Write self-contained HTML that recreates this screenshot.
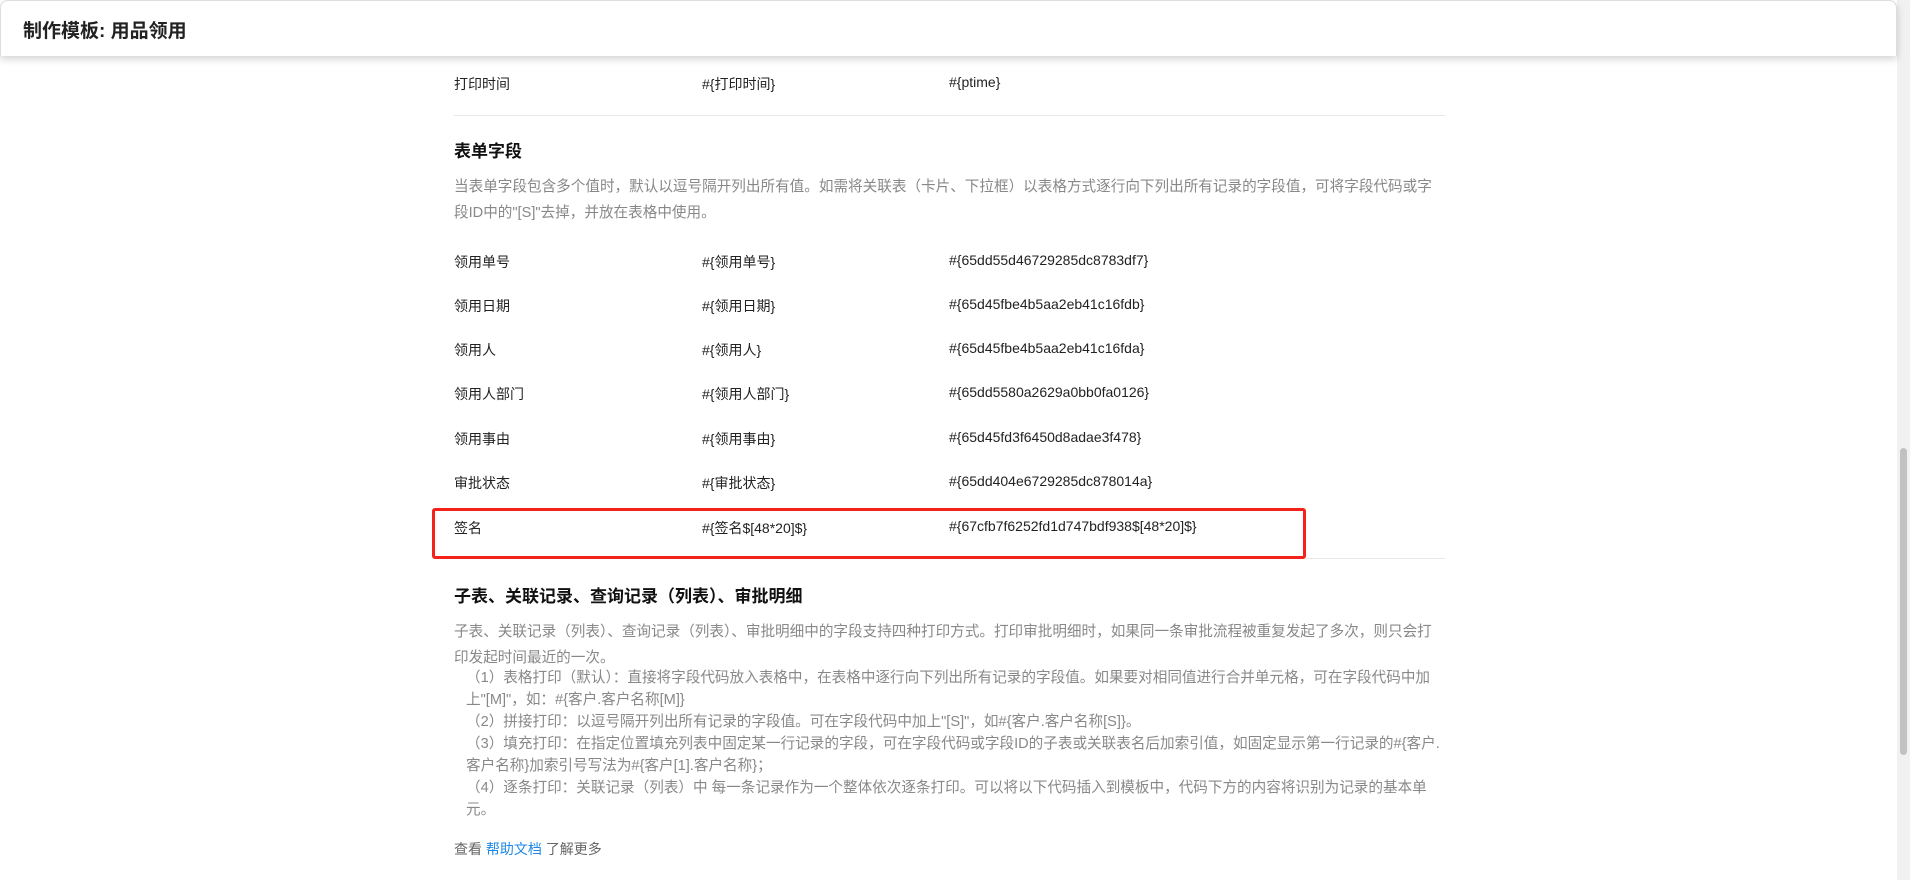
<!DOCTYPE html>
<html><head><meta charset="utf-8"><style>
*{margin:0;padding:0;box-sizing:border-box}
body{width:1910px;height:880px;overflow:hidden;background:#fff;font-family:"Liberation Sans","Noto Sans CJK SC",sans-serif;color:#222;position:relative}
.hdr{position:absolute;left:0;top:0;width:1897px;height:56px;background:#fff;box-shadow:0 3px 8px rgba(0,0,0,.18);border-radius:8px 8px 0 0;border:1px solid #ddd;border-bottom:none;z-index:2}
.hdr h1{position:absolute;left:22px;top:15px;font-size:19px;font-weight:bold;color:#222}
.sb{position:absolute;right:0;top:0;width:13px;height:880px;background:#f1f1f1}
.sb i{position:absolute;left:3px;top:448px;width:7px;height:307px;background:#c1c1c1;border-radius:4px}
.t{position:absolute;font-size:14px;color:#222;white-space:nowrap}
.hr{position:absolute;height:1px;background:#e8e8e8}
.h2{position:absolute;left:454px;font-size:17px;font-weight:bold;color:#111}
.desc{position:absolute;left:454px;width:991px;font-size:14.6px;color:#888;line-height:26px}
.lst{position:absolute;left:454px;width:991px;font-size:14.6px;color:#888;line-height:22px}
.lst div{padding-left:12px}
.red{position:absolute;left:432px;top:508px;width:874px;height:51px;border:3px solid #f5221b;border-radius:3px}
a{color:#1e88e5;text-decoration:none}
</style></head><body>
<div class="hdr"><h1>制作模板: 用品领用</h1></div>
<div class="sb"><i></i></div>

<div class="t" style="left:454px;top:74px">打印时间</div>
<div class="t" style="left:702px;top:74px">#{打印时间}</div>
<div class="t" style="left:949px;top:74px">#{ptime}</div>
<div class="hr" style="left:454px;top:115px;width:991px"></div>

<div class="h2" style="top:137px">表单字段</div>
<div class="desc" style="top:174px">当表单字段包含多个值时，默认以逗号隔开列出所有值。如需将关联表（卡片、下拉框）以表格方式逐行向下列出所有记录的字段值，可将字段代码或字段ID中的"[S]"去掉，并放在表格中使用。</div>

<div class="t" style="left:454px;top:252px">领用单号</div><div class="t" style="left:702px;top:252px">#{领用单号}</div><div class="t" style="left:949px;top:252px">#{65dd55d46729285dc8783df7}</div>
<div class="t" style="left:454px;top:296px">领用日期</div><div class="t" style="left:702px;top:296px">#{领用日期}</div><div class="t" style="left:949px;top:296px">#{65d45fbe4b5aa2eb41c16fdb}</div>
<div class="t" style="left:454px;top:340px">领用人</div><div class="t" style="left:702px;top:340px">#{领用人}</div><div class="t" style="left:949px;top:340px">#{65d45fbe4b5aa2eb41c16fda}</div>
<div class="t" style="left:454px;top:384px">领用人部门</div><div class="t" style="left:702px;top:384px">#{领用人部门}</div><div class="t" style="left:949px;top:384px">#{65dd5580a2629a0bb0fa0126}</div>
<div class="t" style="left:454px;top:429px">领用事由</div><div class="t" style="left:702px;top:429px">#{领用事由}</div><div class="t" style="left:949px;top:429px">#{65d45fd3f6450d8adae3f478}</div>
<div class="t" style="left:454px;top:473px">审批状态</div><div class="t" style="left:702px;top:473px">#{审批状态}</div><div class="t" style="left:949px;top:473px">#{65dd404e6729285dc878014a}</div>
<div class="t" style="left:454px;top:518px">签名</div><div class="t" style="left:702px;top:518px">#{签名$[48*20]$}</div><div class="t" style="left:949px;top:518px">#{67cfb7f6252fd1d747bdf938$[48*20]$}</div>
<div class="red"></div>
<div class="hr" style="left:1306px;top:558px;width:139px"></div>

<div class="h2" style="top:582px">子表、关联记录、查询记录（列表）、审批明细</div>
<div class="desc" style="top:619px">子表、关联记录（列表）、查询记录（列表）、审批明细中的字段支持四种打印方式。打印审批明细时，如果同一条审批流程被重复发起了多次，则只会打印发起时间最近的一次。</div>
<div class="lst" style="top:667px">
<div>（1）表格打印（默认）：直接将字段代码放入表格中，在表格中逐行向下列出所有记录的字段值。如果要对相同值进行合并单元格，可在字段代码中加上"[M]"，如：#{客户.客户名称[M]}</div>
<div>（2）拼接打印：以逗号隔开列出所有记录的字段值。可在字段代码中加上"[S]"，如#{客户.客户名称[S]}。</div>
<div>（3）填充打印：在指定位置填充列表中固定某一行记录的字段，可在字段代码或字段ID的子表或关联表名后加索引值，如固定显示第一行记录的#{客户.客户名称}加索引号写法为#{客户[1].客户名称}；</div>
<div>（4）逐条打印：关联记录（列表）中 每一条记录作为一个整体依次逐条打印。可以将以下代码插入到模板中，代码下方的内容将识别为记录的基本单元。</div>
</div>
<div class="t" style="left:454px;top:839px;color:#666">查看 <a>帮助文档</a> 了解更多</div>
</body></html>
